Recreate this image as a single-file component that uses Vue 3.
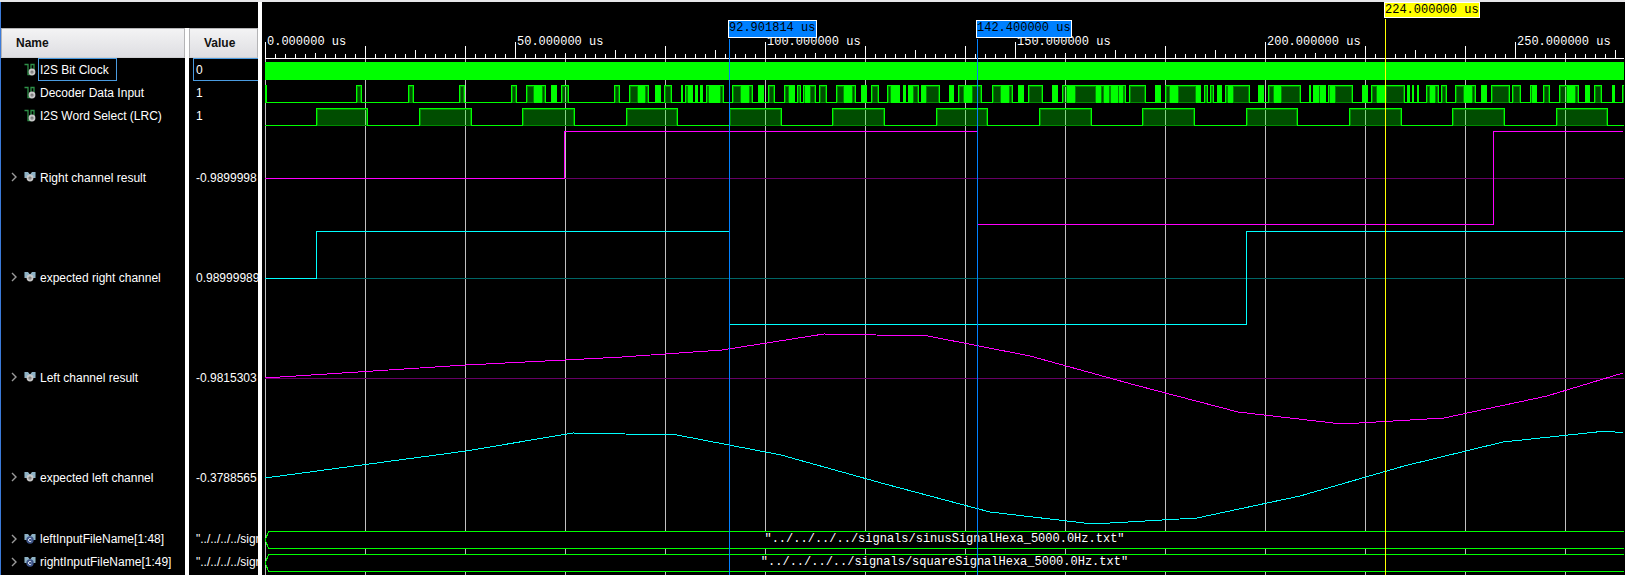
<script setup>
import { ref } from 'vue'

const PX_PER_US = 5
const RULER_END = 2500

const signals = [
  { name: 'I2S Bit Clock', value: '0', icon: 'bit', selected: true },
  { name: 'Decoder Data Input', value: '1', icon: 'bit' },
  { name: 'I2S Word Select (LRC)', value: '1', icon: 'bit' },
  { name: 'Right channel result', value: '-0.9899998', icon: 'bus', tall: true },
  { name: 'expected right channel', value: '0.98999989', icon: 'bus', tall: true },
  { name: 'Left channel result', value: '-0.9815303', icon: 'bus', tall: true },
  { name: 'expected left channel', value: '-0.3788565', icon: 'bus', tall: true },
  { name: 'leftInputFileName[1:48]', value: '"../../../../sign', icon: 'const' },
  { name: 'rightInputFileName[1:49]', value: '"../../../../sign', icon: 'const' },
]
const expanded = ref(new Set())
function toggle(name) {
  expanded.value.has(name) ? expanded.value.delete(name) : expanded.value.add(name)
}

const box = (x, y, w, h) => `M${x} ${y}h${w}v${h}h${-w}z`

/* ruler */
function tickTop(d) {
  if (d % 250 === 0) return 40
  if (d % 250 === 50) return 51
  if (d % 100 === 0) return 44
  if (d % 50 === 0) return 48
  return 52
}
let ticks = ''
let grid = ''
const majors = []
for (let d = 0; d <= RULER_END; d += 10) {
  ticks += box(d, tickTop(d), 1, 56 - tickTop(d))
  if (d % 100 === 0) grid += box(d, 57, 1, 2000)
  if (d % 250 === 0) majors.push({ x: d, text: `${(d / PX_PER_US).toFixed(6)} us` })
}

/* digital lanes: [start, end] is a pulse, [start, end, 1] is a burst too dense to resolve */
const wordSelect = [
  [51, 103], [154, 207], [257, 310], [361, 413], [464, 517], [567, 620], [671, 723],
  [774, 827], [877, 930], [981, 1033], [1084, 1137], [1187, 1240], [1291, 1343],
]
const data = [
  [0, 2, 1], [91, 97], [143, 149], [194, 200], [246, 252], [261, 270], [270, 276, 1], [276, 281],
  [286, 292, 1], [296, 304], [349, 355], [364, 374], [374, 379, 1], [379, 384], [390, 396, 1],
  [399, 407], [416, 418, 1], [420, 424], [424, 428, 1], [430, 433, 1], [435, 438, 1], [441, 445],
  [445, 454, 1], [454, 459], [467, 477], [477, 483, 1], [483, 488], [493, 499, 1], [503, 510],
  [519, 525], [525, 530, 1], [532, 536], [538, 541], [541, 544, 1], [544, 551], [554, 562],
  [571, 580], [580, 586, 1], [586, 591], [596, 602, 1], [606, 614], [622, 627], [627, 635, 1],
  [638, 641, 1], [643, 647, 1], [647, 654], [656, 660, 1], [660, 675], [684, 689, 1], [693, 700],
  [700, 706, 1], [706, 717], [727, 737], [737, 743, 1], [743, 748], [753, 759, 1], [763, 778],
  [787, 793, 1], [797, 803], [803, 809, 1], [809, 832], [832, 835, 1], [835, 840], [840, 843, 1],
  [843, 847], [847, 852, 1], [852, 855], [855, 857, 1], [857, 861], [864, 881], [890, 896, 1],
  [900, 906], [906, 912, 1], [912, 932], [932, 936, 1], [939, 943], [945, 949], [952, 957, 1],
  [960, 964], [964, 967, 1], [967, 985], [993, 999, 1], [1003, 1010], [1010, 1015, 1], [1015, 1036],
  [1044, 1046, 1], [1048, 1053, 1], [1053, 1056], [1056, 1061, 1], [1063, 1066], [1066, 1069, 1],
  [1069, 1088], [1097, 1103, 1], [1106, 1113], [1113, 1120, 1], [1120, 1140], [1142, 1145, 1],
  [1147, 1149, 1], [1152, 1154, 1], [1161, 1166], [1166, 1169, 1], [1169, 1174], [1176, 1182],
  [1190, 1200], [1200, 1206, 1], [1206, 1211], [1216, 1222, 1], [1226, 1245], [1247, 1256],
  [1265, 1268], [1268, 1272, 1], [1278, 1285], [1294, 1303], [1303, 1309, 1], [1309, 1314],
  [1320, 1325, 1], [1329, 1337], [1347, 1350, 1], [1357, 1363],
]
function digital(pulses) {
  let fill = ''
  let inner = ''
  let line = ''
  let x = 0
  for (const [a, b, dense] of pulses) {
    if (a > x) line += box(x, 21, a - x, 1)
    if (dense) line += box(a, 4, b - a, 18)
    else {
      fill += box(a, 4, b - a, 18)
      inner += box(a + 1, 5, b - a - 2, 1) + box(a + 1, 21, b - a - 2, 1)
      inner += box(a + 1, 5, 1, 17) + box(b - 2, 5, 1, 17)
      line += box(a, 4, b - a, 1) + box(a, 4, 1, 18) + box(b - 1, 4, 1, 18)
    }
    x = b
  }
  if (x < 1359) line += box(x, 21, 1359 - x, 1)
  return { fill, inner, line }
}
const digitalLanes = [
  { y: 79, ...digital(data) },
  { y: 102, ...digital(wordSelect) },
]

/* analog lanes, y measured from the lane's top */
const stepRight =
  box(0, 51, 300, 1) + box(299, 4, 1, 48) + box(299, 4, 414, 1) + box(712, 4, 1, 94) +
  box(712, 97, 517, 1) + box(1228, 4, 1, 94) + box(1228, 4, 130, 1)
const stepExpected =
  box(0, 51, 52, 1) + box(51, 4, 1, 48) + box(51, 4, 414, 1) + box(464, 4, 1, 94) +
  box(464, 97, 518, 1) + box(981, 4, 1, 94) + box(981, 4, 377, 1)
const sineLeft =
  '0,51 201,38 300,33 357,30 457,23 559,7 663,9 765,29 870,58 973,85 1077,97 1179,91 1282,69 1358,46'
const sineExpected =
  '0,51 201,24 308,6 412,8 516,28 620,57 725,85 828,97 932,91 1035,69 1139,39 1238,15 1341,4 1358,6'

const buses = [
  { y: 525, text: '"../../../../signals/sinusSignalHexa_5000.0Hz.txt"' },
  { y: 548, text: '"../../../../signals/squareSignalHexa_5000.0Hz.txt"' },
]

const cursors = [
  { x: 464, y: 18, w: 89, h: 18, text: '92.901814 us', kind: 'marker' },
  { x: 712, y: 18, w: 96, h: 18, text: '142.400000 us', kind: 'marker' },
  { x: 1120, y: 0, w: 96, h: 16, text: '224.000000 us', kind: 'main' },
]
</script>

<template>
  <div class="viewer">
    <div class="strip"></div>
    <div class="panes">
      <div class="signals">
        <table>
          <colgroup>
            <col class="col-name" />
            <col class="col-value" />
          </colgroup>
          <thead>
            <tr>
              <th scope="col"><div class="head">Name</div></th>
              <th scope="col"><div class="head">Value</div></th>
            </tr>
          </thead>
          <tbody>
            <tr v-for="s in signals" :key="s.name" :class="{ tall: s.tall, selected: s.selected }">
              <td>
                <div class="name">
                  <button
                    v-if="s.icon !== 'bit'"
                    type="button"
                    :aria-label="`Expand ${s.name}`"
                    :aria-expanded="expanded.has(s.name)"
                    @click="toggle(s.name)"
                  >
                    <svg width="6" height="10" viewBox="0 0 6 10">
                      <path d="M1 1L5 5L1 9" fill="none" stroke="#9a9a9a" stroke-width="1.4" />
                    </svg>
                  </button>
                  <span v-else class="spacer"></span>
                  <svg v-if="s.icon === 'bit'" class="icon" width="12" height="14" viewBox="0 0 12 14">
                    <path d="M0.5 1.5H4V11.5H7V1.5H10V6" fill="none" stroke="#2f9048" stroke-width="1.3" />
                    <circle cx="8" cy="9" r="3.4" fill="#c9c9c9" />
                    <circle cx="8" cy="9" r="1.5" fill="#666" />
                    <circle cx="8" cy="9" r="0.6" fill="#e8e8e8" />
                  </svg>
                  <svg v-else class="icon" width="12" height="14" viewBox="0 0 12 14">
                    <path d="M0.5 2H4L5.5 4H6.5L8 2H11.5V8H8.5L7.5 6H4.5L3.5 8H0.5Z" fill="#8fb3c6" />
                    <path d="M0 2V6M12 2V6" stroke="#4d6674" />
                    <template v-if="s.icon === 'bus'">
                      <circle cx="6" cy="8" r="3.4" fill="#c9c9c9" />
                      <circle cx="6" cy="8" r="1.5" fill="#666" />
                      <circle cx="6" cy="8" r="0.6" fill="#e8e8e8" />
                    </template>
                    <template v-else>
                      <circle cx="6" cy="8" r="3.7" fill="#3d5488" />
                      <path d="M7.3 7A1.6 1.6 0 1 0 7.3 9" fill="none" stroke="#dfe6f2" />
                    </template>
                  </svg>
                  <span class="label">{{ s.name }}</span>
                </div>
              </td>
              <td><div class="value">{{ s.value }}</div></td>
            </tr>
            <tr class="rest"><td></td><td></td></tr>
          </tbody>
        </table>
      </div>

      <div class="wave">
        <svg class="plot" role="img" aria-label="Signal waveforms">
          <path :d="grid" fill="#c0c0c0" />
          <g fill="#fff">
            <path :d="ticks" />
            <rect x="0" y="56" width="100%" height="1" />
            <text v-for="m in majors" :key="m.x" :x="m.x + 2" y="43">{{ m.text }}</text>
          </g>

          <rect x="0" y="60" width="100%" height="18" fill="#0f0" />
          <g v-for="lane in digitalLanes" :key="lane.y" :transform="`translate(0 ${lane.y})`">
            <path :d="lane.fill" fill="#0f0" fill-opacity="0.3" />
            <path :d="lane.inner" fill="#008c00" />
            <path :d="lane.line" fill="#0f0" />
          </g>

          <g transform="translate(0 125)">
            <rect class="zero-magenta" y="51" width="100%" height="1" />
            <path :d="stepRight" fill="#f0f" />
          </g>
          <g transform="translate(0 225)">
            <rect class="zero-cyan" y="51" width="100%" height="1" />
            <path :d="stepExpected" fill="#0ff" />
          </g>
          <g transform="translate(0 325)">
            <rect class="zero-magenta" y="51" width="100%" height="1" />
            <polyline :points="sineLeft" stroke="#f0f" />
          </g>
          <polyline transform="translate(0 425)" :points="sineExpected" stroke="#0ff" />

          <g v-for="b in buses" :key="b.y" :transform="`translate(0 ${b.y})`">
            <rect x="1" y="4" width="100%" height="18" fill="#000" />
            <rect x="4" y="4" width="100%" height="1" fill="#0f0" />
            <rect x="4" y="21" width="100%" height="1" fill="#0f0" />
            <polyline points="4,4 0,13 4,22" stroke="#0f0" />
            <text x="50%" y="15" text-anchor="middle" fill="#fff">{{ b.text }}</text>
          </g>

          <g v-for="c in cursors" :key="c.x" :class="c.kind">
            <rect class="stem" :x="c.x" :y="c.y + c.h + 1" width="1" height="2000" />
            <rect :x="c.x - 1" :y="c.y" :width="c.w" :height="c.h" fill="#fff" />
            <rect class="tag" :x="c.x" :y="c.y + 1" :width="c.w - 2" :height="c.h - 2" />
            <text :x="c.x" :y="c.y + 11">{{ c.text }}</text>
          </g>
        </svg>
      </div>
    </div>
  </div>
</template>

<style>
body {
  margin: 0;
  background: #000;
}
</style>

<style scoped>
.viewer {
  display: flex;
  flex-direction: column;
  min-height: 100vh;
  background: #000;
  color: #fff;
  font: 12px/14px "Liberation Sans", Arial, sans-serif;
}
.strip {
  height: 2px;
  background: #e6e6e8;
}
.panes {
  display: flex;
  flex: 1;
}
.signals {
  flex: none;
  width: 257px;
  padding-top: 26px;
  border-left: 1px solid #3b7ad9;
  border-right: 4px solid #fff;
}
table {
  width: 100%;
  table-layout: fixed;
  border-collapse: collapse;
}
.col-name {
  width: 188px;
}
th,
td {
  padding: 0;
  text-align: left;
}
.head {
  box-sizing: border-box;
  height: 30px;
  padding-left: 14px;
  border: 1px solid #b4b4b6;
  border-bottom-color: #d0d0d2;
  background: linear-gradient(#f3f3f4, #dedee2);
  color: #111;
  font-weight: bold;
  line-height: 29px;
}
th:first-child,
td:first-child {
  background: linear-gradient(#fff, #fff) right / 4px 100% no-repeat;
}
th:first-child .head {
  margin-right: 4px;
}
tbody tr {
  height: 23px;
}
tbody tr.tall {
  height: 100px;
}
tbody tr.rest {
  height: 2px;
}
.name {
  display: flex;
  align-items: center;
  height: 23px;
  margin-right: 4px;
}
button {
  display: flex;
  width: 23px;
  padding: 0 0 0 10px;
  border: 0;
  background: none;
  cursor: pointer;
}
.spacer {
  width: 23px;
}
.icon {
  flex: none;
}
.label {
  box-sizing: border-box;
  height: 23px;
  margin-left: 2px;
  padding: 0 7px 0 1px;
  border: 1px solid transparent;
  line-height: 22px;
  white-space: nowrap;
}
.value {
  box-sizing: border-box;
  height: 23px;
  margin-left: 4px;
  padding-left: 2px;
  border: 1px solid transparent;
  border-right: 0;
  line-height: 22px;
  white-space: nowrap;
  overflow: hidden;
}
.selected .label,
.selected .value {
  border-color: #4a9be0;
}
.wave {
  display: flex;
  flex: 1;
  min-width: 0;
  padding: 0 1px 0 3px;
}
.plot {
  flex: 1;
  min-width: 0;
  overflow: hidden;
  shape-rendering: crispEdges;
}
.plot text {
  font: 12px "Liberation Mono", "Courier New", monospace;
}
.plot polyline {
  fill: none;
}
.zero-magenta {
  fill: #660066;
}
.zero-cyan {
  fill: #006666;
}
.marker .stem,
.marker .tag {
  fill: #0080ff;
}
.main .stem,
.main .tag {
  fill: #ff0;
}
</style>
